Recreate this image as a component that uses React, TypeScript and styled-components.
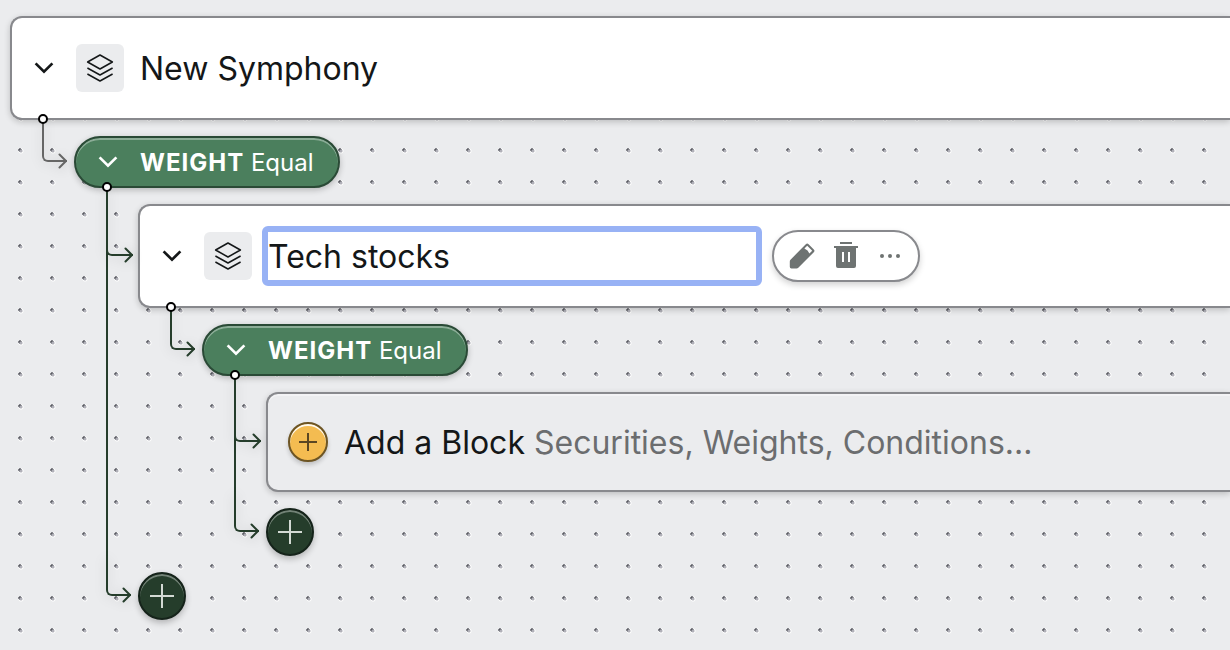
import React, { useState } from "react";
import styled, { createGlobalStyle, css } from "styled-components";

const color = {
  canvas: "#ebecee",
  ink: "#141718",
  muted: "#6b6d6f",
  edge: "#88898d",
  pine: "#253d2b",
  pineEdge: "#15231a",
  leaf: "#4b7f5d",
  leafEdge: "#2a4a36",
  focus: "#98b2f5",
  amber: "#f4bc51",
  amberEdge: "#6d5524",
};

const GlobalStyle = createGlobalStyle`
  *, *::before, *::after { box-sizing: border-box; }
  body {
    margin: 0;
    background: ${color.canvas};
    color: ${color.ink};
    font-family: Inter, "Liberation Sans", sans-serif;
  }
  button, input { font: inherit; color: inherit; }
`;

const Canvas = styled.main`
  min-height: 100vh;
  padding: 16px 0 30px 10px;
  overflow: hidden;
  background-color: ${color.canvas};
  background-image:
    radial-gradient(circle at 17px 17px, #b0b0b8 1px, rgba(176, 176, 184, 0) 2px),
    radial-gradient(circle at 16px 16px, #5a5b63 1px, rgba(90, 91, 99, 0.5) 2px, rgba(90, 91, 99, 0) 2px),
    radial-gradient(circle at 17px 17px, #ffffff 2px, rgba(255, 255, 255, 0) 3px);
  background-size: 32px 32px;
  background-position: 4px 6px;
`;

const Tree = styled.ul`
  list-style: none;
  margin: 0;
  padding: 0;
`;

const Branch = styled.ul`
  list-style: none;
  display: flex;
  flex-direction: column;
  gap: 16px;
  margin: 0;
  padding: 16px 0 0 64px;
`;

const BranchItem = styled.li<{ $tone: string }>`
  position: relative;
  color: ${(p) => p.$tone};

  /* trunk that carries on to the next sibling */
  &:not(:last-child)::before {
    content: "";
    position: absolute;
    left: -32px;
    top: -16px;
    bottom: -16px;
    width: 2px;
    background: currentColor;
  }
`;

const Row = styled.div`
  position: relative;
  color: ${color.ink};
`;

const Elbow = styled.span<{ $tone: string; $reach: number }>`
  position: absolute;
  left: -32px;
  top: -16px;
  bottom: 50%;
  width: ${(p) => p.$reach}px;
  border: solid ${(p) => p.$tone};
  border-width: 0 0 2px 2px;
  border-bottom-left-radius: 6px;
  color: ${(p) => p.$tone};
  filter: drop-shadow(0 2px 6px rgba(0, 0, 0, 0.16));
  pointer-events: none;

  svg {
    position: absolute;
    right: 0;
    bottom: -9px;
  }
`;

const Port = styled.span`
  position: absolute;
  z-index: 1;
  left: 28px;
  bottom: -4px;
  width: 10px;
  height: 10px;
  border: 2px solid #000;
  border-radius: 50%;
  background: #fff;
`;

const Card = styled.div`
  display: flex;
  align-items: center;
  min-height: 104px;
  padding: 20px;
  border: 2px solid ${color.edge};
  border-right: 0;
  border-radius: 12px 0 0 12px;
  background: #fff;
  box-shadow: 0 2px 6px rgba(0, 0, 0, 0.2);
`;

const IconButton = styled.button`
  display: grid;
  grid-template: 24px / 24px;
  place-items: center;
  flex: none;
  width: 24px;
  height: 24px;
  padding: 0;
  border: 0;
  background: none;
  cursor: pointer;
`;

const IconTile = styled.span`
  display: grid;
  place-items: center;
  flex: none;
  width: 48px;
  height: 48px;
  margin-left: 20px;
  border-radius: 6px;
  background: ${color.canvas};
`;

const Title = styled.h1`
  margin: 0 0 0 16px;
  padding-top: 2px;
  font-size: 32px;
  line-height: 48px;
  font-weight: 400;
`;

const NameInput = styled.input`
  flex: 0 1 500px;
  min-width: 0;
  height: 60px;
  margin: 0 10px;
  padding: 0;
  border: 6px solid ${color.focus};
  border-radius: 6px;
  outline: 0;
  background: #fff;
  font-size: 32px;
  line-height: 48px;
`;

const Toolbar = styled.div`
  display: flex;
  align-items: center;
  gap: 20px;
  height: 52px;
  padding: 0 16px;
  border: 2px solid ${color.edge};
  border-radius: 26px;
  background: #fff;
  color: #6e7372;
  box-shadow: 0 3px 6px rgba(0, 0, 0, 0.18);
`;

const Pill = styled.div`
  display: inline-flex;
  align-items: center;
  gap: 20px;
  height: 52px;
  padding: 0 24px 0 20px;
  border: 2px solid ${color.leafEdge};
  border-radius: 26px;
  background: ${color.leaf};
  color: #fff;
  vertical-align: top;
  box-shadow: inset 0 2px 0 rgba(255, 255, 255, 0.36), 0 2px 6px rgba(0, 0, 0, 0.24);
`;

const PillRow = styled(Row)`
  width: fit-content;
`;

const PillLabel = styled.span`
  padding-top: 2px;
  font-size: 24px;
  line-height: 32px;
  white-space: pre;

  b {
    font-weight: 700;
    letter-spacing: 1px;
  }
`;

const AddBlock = styled.button`
  display: flex;
  align-items: center;
  gap: 16px;
  width: 100%;
  min-height: 100px;
  padding: 0 20px;
  border: 2px solid ${color.edge};
  border-right: 0;
  border-radius: 12px 0 0 12px;
  background: ${color.canvas};
  box-shadow: inset 0 2px 0 rgba(255, 255, 255, 0.4), 0 2px 6px rgba(0, 0, 0, 0.2);
  font-size: 32px;
  line-height: 48px;
  text-align: left;
  white-space: nowrap;
  cursor: pointer;
`;

const AddBlockLabel = styled.span`
  padding-top: 2px;
`;

const Hint = styled.span`
  color: ${color.muted};
`;

const disc = css`
  display: grid;
  place-items: center;
  flex: none;
  padding: 0;
  border: 2px solid;
  border-radius: 50%;
`;

const AmberDisc = styled.span`
  ${disc}
  width: 40px;
  height: 40px;
  border-color: ${color.amberEdge};
  background: ${color.amber};
  color: #5b4622;
  box-shadow: inset 0 2px 0 rgba(255, 255, 255, 0.9), 0 3px 4px rgba(0, 0, 0, 0.18);
`;

const AddButton = styled.button`
  ${disc}
  width: 48px;
  height: 48px;
  border-color: ${color.pineEdge};
  background: ${color.pine};
  color: #d3dad4;
  box-shadow: inset 0 2px 0 rgba(255, 255, 255, 0.36), 0 3px 6px rgba(0, 0, 0, 0.24);
  cursor: pointer;
`;

const ArrowHead = () => (
  <svg width="9" height="16" viewBox="0 0 9 16" fill="none" stroke="currentColor" strokeWidth="2" strokeLinecap="round" strokeLinejoin="round" aria-hidden="true">
    <path d="M1.5 1.5 8 8l-6.5 6.5" />
  </svg>
);

const Chevron = () => (
  <svg width="24" height="24" viewBox="0 0 24 24" fill="none" stroke="currentColor" strokeWidth="2.7" aria-hidden="true">
    <path d="M3.6 7.4 12 15.600l8.400-8.200" />
  </svg>
);

const Layers = () => (
  <svg width="28" height="28" viewBox="0 0 28 28" fill="none" stroke="currentColor" strokeWidth="1.5" strokeLinejoin="round" aria-hidden="true">
    <path d="M14 1 26.4 8 14 15 1.6 8z" />
    <path d="M1.4 14 14 21l12.6-7" />
    <path d="M1.4 20 14 27l12.6-7" />
  </svg>
);

const Plus = ({ size }: { size: number }) => (
  <svg width={size} height={size} viewBox={`0 0 ${size} ${size}`} fill="none" stroke="currentColor" strokeWidth="2" aria-hidden="true">
    <path d={`M${size / 2} 0V${size}M0 ${size / 2}H${size}`} />
  </svg>
);

const Pencil = () => (
  <svg width="26" height="26" viewBox="0 0 26 26" fill="currentColor" aria-hidden="true">
    <path fillRule="evenodd" d="M16.8 1.2a2 2 0 0 1 2.8 0l5.2 5.2a2 2 0 0 1 0 2.800L9.300 24.700a2.400 2.400 0 0 1-1.700.7H2.400A1.600 1.600 0 0 1 .8 23.800v-5.400a2.400 2.400 0 0 1 .7-1.700zM18.200 2.800 15.400 5.600a8 8 0 0 1 5 5l2.800-2.800z" />
  </svg>
);

const Trash = () => (
  <svg width="24" height="28" viewBox="0 0 24 28" fill="currentColor" aria-hidden="true">
    <path d="M6 0h12v2H6zM0 4h24v2H0z" />
    <path fillRule="evenodd" d="M2 6h20v18a2 2 0 0 1-2 2H4a2 2 0 0 1-2-2zM8 10v10h2V10zM14 10v10h2V10z" />
  </svg>
);

const Ellipsis = () => (
  <svg width="24" height="24" viewBox="0 0 24 24" fill="currentColor" aria-hidden="true">
    <circle cx="4" cy="12" r="2" />
    <circle cx="12" cy="12" r="2" />
    <circle cx="20" cy="12" r="2" />
  </svg>
);

/* Cards sit two pixels closer to their arrow than pills and discs do. */
const REACH = { card: 27, round: 25 };

const Connector = ({ to, tone = color.pine }: { to: keyof typeof REACH; tone?: string }) => (
  <Elbow $tone={tone} $reach={REACH[to]}>
    <ArrowHead />
  </Elbow>
);

const WeightPill = ({ tone }: { tone?: string }) => (
  <PillRow>
    <Connector to="round" tone={tone} />
    <Pill>
      <IconButton type="button" aria-label="Collapse weight">
        <Chevron />
      </IconButton>
      <PillLabel>
        <b>WEIGHT</b> Equal
      </PillLabel>
    </Pill>
    <Port />
  </PillRow>
);

export default function App() {
  const [name, setName] = useState("Tech stocks");

  return (
    <>
      <GlobalStyle />
      <Canvas>
        <Tree>
          <li>
            <Row>
              <Card>
                <IconButton type="button" aria-label="Collapse symphony">
                  <Chevron />
                </IconButton>
                <IconTile>
                  <Layers />
                </IconTile>
                <Title>New Symphony</Title>
              </Card>
              <Port />
            </Row>
            <Branch>
              <BranchItem $tone="#666666">
                <WeightPill tone="#666666" />
                <Branch>
                  <BranchItem $tone={color.pine}>
                    <Row>
                      <Connector to="card" />
                      <Card>
                        <IconButton type="button" aria-label="Collapse group">
                          <Chevron />
                        </IconButton>
                        <IconTile>
                          <Layers />
                        </IconTile>
                        <NameInput
                          aria-label="Group name"
                          value={name}
                          onChange={(e) => setName(e.target.value)}
                        />
                        <Toolbar>
                          <IconButton type="button" aria-label="Edit">
                            <Pencil />
                          </IconButton>
                          <IconButton type="button" aria-label="Delete">
                            <Trash />
                          </IconButton>
                          <IconButton type="button" aria-label="More">
                            <Ellipsis />
                          </IconButton>
                        </Toolbar>
                      </Card>
                      <Port />
                    </Row>
                    <Branch>
                      <BranchItem $tone={color.pine}>
                        <WeightPill />
                        <Branch>
                          <BranchItem $tone={color.pine}>
                            <Row>
                              <Connector to="card" />
                              <AddBlock type="button">
                                <AmberDisc>
                                  <Plus size={18} />
                                </AmberDisc>
                                <AddBlockLabel>
                                  Add a Block <Hint>Securities, Weights, Conditions...</Hint>
                                </AddBlockLabel>
                              </AddBlock>
                            </Row>
                          </BranchItem>
                          <BranchItem $tone={color.pine}>
                            <Row>
                              <Connector to="round" />
                              <AddButton type="button" aria-label="Add block">
                                <Plus size={24} />
                              </AddButton>
                            </Row>
                          </BranchItem>
                        </Branch>
                      </BranchItem>
                    </Branch>
                  </BranchItem>
                  <BranchItem $tone={color.pine}>
                    <Row>
                      <Connector to="round" />
                      <AddButton type="button" aria-label="Add group">
                        <Plus size={24} />
                      </AddButton>
                    </Row>
                  </BranchItem>
                </Branch>
              </BranchItem>
            </Branch>
          </li>
        </Tree>
      </Canvas>
    </>
  );
}
